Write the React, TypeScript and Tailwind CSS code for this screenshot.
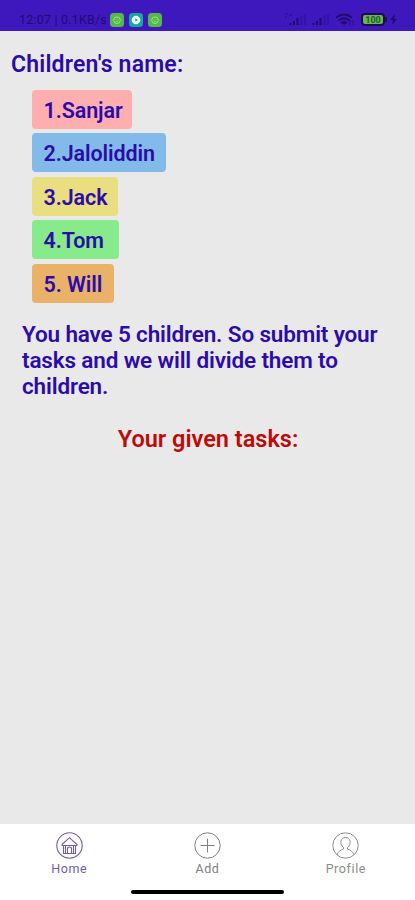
import React from 'react';

const children = [
    { label: '1.Sanjar', style: 'w-[100px] bg-[#ffaeb0]' },
    { label: '2.Jaloliddin', style: 'w-[134px] bg-[#82bbea]' },
    { label: '3.Jack', style: 'w-[86px] bg-[#e9df80]' },
    { label: '4.Tom', style: 'w-[87px] bg-[#87eb8b]' },
    { label: '5. Will', style: 'w-[81.5px] bg-[#eab268]' },
];

const AppBadge: React.FC<{ color: string; round?: boolean }> = ({ color, round }) => (
    <svg className="h-[14px] w-[14px]" viewBox="0 0 14 14" fill="none">
        <rect width="14" height="14" rx="3.5" fill={color} />
        {round ? (
            <>
                <circle cx="7" cy="7" r="4.3" fill="#e8fffb" />
                <path d="M6 5.2 9 7 6.5 8.6Z" fill={color} />
            </>
        ) : (
            <>
                <circle cx="7" cy="7.2" r="3.3" stroke="#9be58c" />
                <path d="M5.8 6.5v.5M8.2 6.5v.5M5.8 8.4h2.4" stroke="#9be58c" strokeWidth=".8" />
            </>
        )}
    </svg>
);

const StatusBar: React.FC = () => (
    <header className="flex h-[31px] items-end justify-between bg-[#3e18bc] pl-[19px] pr-[17px] pb-1 text-[#200b70]">
        <div className="flex items-center">
            <span className="w-[91px] whitespace-nowrap text-[12.5px] leading-[15px] tracking-[0.2px]">12:07 | 0.1KB/s</span>
            <div className="flex gap-[5px]">
                <AppBadge color="#54b947" />
                <AppBadge color="#14a99d" round />
                <AppBadge color="#54b947" />
            </div>
        </div>
        <svg className="h-4 w-[115px]" viewBox="0 0 115 16" fill="none">
            <path d="M2 3h3M2 6h2M6 4h3" stroke="#2a0c8c" strokeWidth="1.2" />
            <path d="M7.5 14v-2M11 14v-4M14.5 14V7M30.5 14v-2M34 14v-4M37.5 14V7" stroke="#200b70" strokeWidth="2" />
            <path d="M18.5 14V4M22 14V3M41.5 14V4M45 14V3" stroke="#3211a0" strokeWidth="1.5" />
            <path d="M53 6.5q8-6 16 0M55.5 9.5q5.5-4.5 11 0M58 12q3-2.5 6 0" stroke="#200b70" strokeWidth="2" />
            <path d="m59 12 2 2 2-2Z" fill="#200b70" />
            <path d="M67 9v5M70 14v-5" stroke="#2a0c8c" />
            <rect x="79" y="3" width="22" height="11" rx="3" fill="#63b94c" stroke="#1c0d53" strokeWidth="2" />
            <path d="M103 6v5" stroke="#1c0d53" strokeWidth="1.8" />
            <text x="90" y="11.7" textAnchor="middle" fontSize="9" fontWeight="700" fill="#235b36">100</text>
            <path d="m112 3-5 6h3l-1 5 5-6h-3Z" fill="#200b70" />
        </svg>
    </header>
);

const HomeIcon: React.FC = () => (
    <svg className="h-[27px] w-[27px]" viewBox="0 0 27 27" fill="none" stroke="currentColor" strokeWidth="1.1">
        <circle cx="13.5" cy="13.5" r="12.7" />
        <path d="m6 12.5 7.5-6.8 7.5 6.8v1H6z" />
        <path d="M7.5 13.5v8h12v-8M11.5 21.5V16q2-2 4 0v5.5M9.5 14v7.5M17.5 14v7.5" />
    </svg>
);

const AddIcon: React.FC = () => (
    <svg className="h-[27px] w-[27px]" viewBox="0 0 27 27" fill="none" stroke="currentColor" strokeWidth="1">
        <circle cx="13.5" cy="13.5" r="12.7" />
        <path d="M13.5 6.5v14M6.5 13.5h14" />
    </svg>
);

const ProfileIcon: React.FC = () => (
    <svg className="h-[27px] w-[27px]" viewBox="0 0 27 27" fill="none" stroke="currentColor" strokeWidth="1">
        <circle cx="13.5" cy="13.5" r="12.7" />
        <path d="M11.5 15.5C7 12 8.5 5.5 13.5 5.5s6.500 6.500 2 10V17c3 1 5.500 2.500 6.500 6M11.500 15.500V17c-3 1-5.500 2.500-6.500 6" />
    </svg>
);

const BottomNav: React.FC = () => (
    <footer className="flex h-[76px] flex-col items-center bg-white">
        <nav className="grid w-full grid-cols-3 text-[12.5px] leading-[15px] tracking-[0.6px]">
            <div className="flex flex-col items-center pt-2 text-[#6f5cb5]">
                <HomeIcon />
                <span className="mt-[2px]">Home</span>
            </div>
            <div className="flex flex-col items-center pt-2 text-[#808080]">
                <AddIcon />
                <span className="mt-[2px]">Add</span>
            </div>
            <div className="flex flex-col items-center pt-2 text-[#8c8c8c]">
                <ProfileIcon />
                <span className="mt-[2px]">Profile</span>
            </div>
        </nav>
        <div className="mt-[14px] h-1 w-[153px] rounded-full bg-black" />
    </footer>
);

const App: React.FC = () => {
    return (
        <div className="flex h-[900px] w-[415px] flex-col bg-[#e9e9e9] font-[Roboto,sans-serif]">
            <StatusBar />
            <main className="flex-1 font-semibold text-[#2b0cab]">
                <h1 className="ml-[11px] pt-5 text-[23px] leading-7 tracking-[0.2px]">Children's name:</h1>
                <ul className="mt-[10.5px] ml-8 flex flex-col gap-[4.5px]">
                    {children.map((child) => (
                        <li
                            key={child.label}
                            className={`${child.style} flex h-[39px] items-center rounded-[4px] pt-1 pl-[11.5px] text-[21.5px] tracking-[-0.1px] whitespace-nowrap`}
                        >
                            {child.label}
                        </li>
                    ))}
                </ul>
                <p className="mt-[18.5px] ml-[22px] w-[370px] text-[22.5px] leading-[26px] tracking-[-0.15px]">
                    You have 5 children. So submit your tasks and we will divide them to children.
                </p>
                <h2 className="mt-[25.5px] pl-[1px] text-center text-[23.5px] leading-7 text-[#bd0b09]">Your given tasks:</h2>
            </main>
            <BottomNav />
        </div>
    );
};

export default App;
